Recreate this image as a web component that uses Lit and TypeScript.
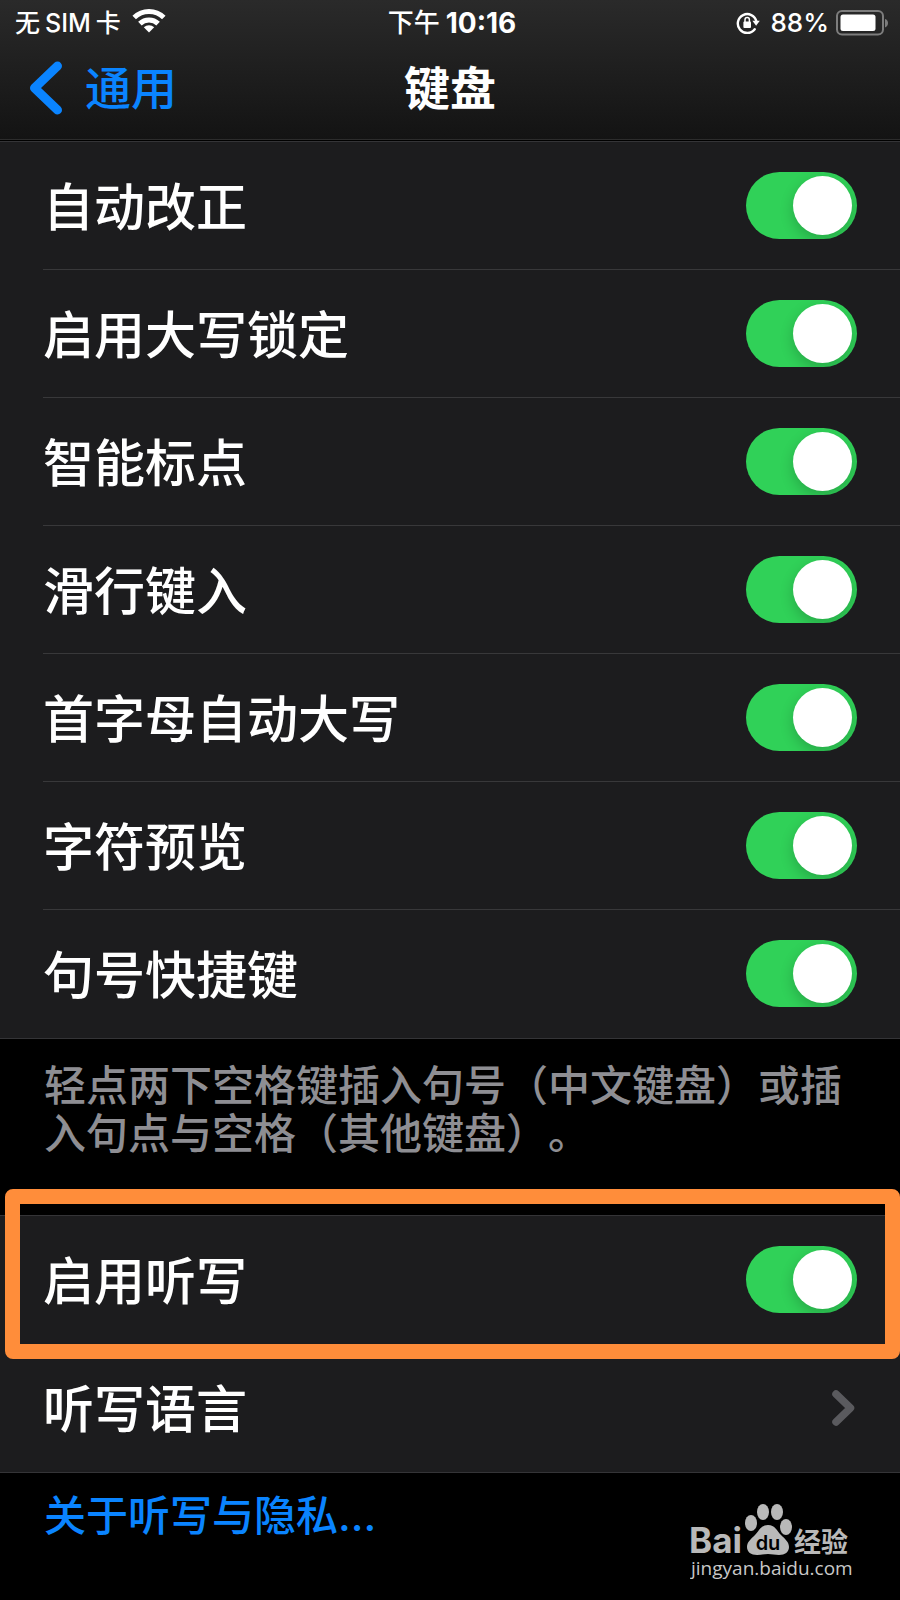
import { LitElement, html, css, svg } from "lit";
import { customElement, property } from "lit/decorators.js";

const wifiIcon = svg`
  <svg class="wifi" viewBox="0 0 34 26" width="34" height="26" aria-hidden="true">
    <g fill="none" stroke="#fff" stroke-width="5">
      <path d="M2.2 9.6a21 21 0 0 1 29.6 0" />
      <path d="M7.9 15.6a13 13 0 0 1 18.2 0" />
    </g>
    <path d="M17 24.5l-5.2-5.2a7.4 7.4 0 0 1 10.4 0z" fill="#fff" />
  </svg>`;

const lockIcon = svg`
  <svg viewBox="0 0 24 24" width="24" height="24" aria-hidden="true">
    <path d="M18.7 18.2A9.4 9.4 0 1 1 20.4 10.5" fill="none" stroke="#fff" stroke-width="2.4" stroke-linecap="round" />
    <path d="M16.4 9.8h7.4l-3.7 5z" fill="#fff" />
    <rect x="7.4" y="10.6" width="7.6" height="6.4" rx="1" fill="#fff" />
    <path d="M9 11V8.8a2.2 2.2 0 0 1 4.4 0V11" fill="none" stroke="#fff" stroke-width="1.5" />
  </svg>`;

const batteryIcon = svg`
  <svg viewBox="0 0 54 26" width="54" height="26" aria-hidden="true">
    <rect x="2" y="1" width="46" height="23.5" rx="5" fill="none" stroke="#7d7d7d" stroke-width="2" />
    <rect x="5.5" y="4.5" width="35" height="16.5" rx="2.5" fill="#fff" />
    <path d="M50 9c4 1 4 7.4 0 8.4z" fill="#7d7d7d" />
  </svg>`;

@customElement("settings-toggle")
export class SettingsToggle extends LitElement {
  @property() label = "";
  @property({ type: Boolean }) on = true;

  static styles = css`
    :host {
      display: block;
    }
    .row {
      display: flex;
      align-items: center;
      justify-content: space-between;
      height: 100%;
      gap: 20px;
    }
    .name {
      padding-top: 4px;
    }
    .switch {
      appearance: none;
      flex: none;
      box-sizing: border-box;
      width: 111px;
      height: 67px;
      margin: 0;
      padding: 4px 5px;
      border-radius: 34px;
      background: #39393d;
      display: flex;
      align-items: center;
      overflow: hidden;
      cursor: pointer;
    }
    .switch::before {
      content: "";
      width: 59px;
      height: 59px;
      border-radius: 50%;
      background: #fff;
      box-shadow: 0 5px 14px rgba(0, 0, 0, 0.2);
    }
    .switch:checked {
      background: #30d158;
      justify-content: flex-end;
    }
  `;

  render() {
    return html`
      <label class="row">
        <span class="name">${this.label}</span>
        <input
          class="switch"
          type="checkbox"
          role="switch"
          .checked=${this.on}
          @change=${(e: Event) => (this.on = (e.target as HTMLInputElement).checked)}
        />
      </label>
    `;
  }
}

@customElement("app-root")
export class AppRoot extends LitElement {
  private typing = [
    "自动改正",
    "启用大写锁定",
    "智能标点",
    "滑行键入",
    "首字母自动大写",
    "字符预览",
    "句号快捷键",
  ];

  static styles = css`
    :host {
      display: block;
      position: relative;
      min-height: 100vh;
      background: #000;
      color: #fff;
      font-family: "Inter", "Noto Sans CJK SC", sans-serif;
      font-weight: 500;
      text-spacing-trim: space-all;
    }
    .header {
      box-sizing: border-box;
      height: 141px;
      background: linear-gradient(#2a2a2a, #131313);
      border-bottom: 1px solid #000;
      box-shadow: inset 0 -1px #2c2c2c;
    }
    .status,
    .nav {
      display: grid;
      grid-template-columns: 1fr auto 1fr;
      align-items: center;
    }
    .status {
      height: 46px;
      padding: 0 11px 0 15px;
      font-size: 26px;
      line-height: 32px;
    }
    .carrier,
    .time,
    .power {
      display: flex;
      align-items: center;
      gap: 6px;
    }
    .carrier {
      gap: 5px;
      font-size: 25px;
    }
    .wifi {
      margin: 0 0 4px 6px;
    }
    .clock {
      font-size: 28px;
      font-weight: 700;
    }
    .power {
      justify-content: flex-end;
    }
    .percent {
      margin-left: 4px;
    }
    .nav {
      height: 84px;
      padding: 0 28px;
    }
    .back {
      justify-self: start;
      display: flex;
      align-items: center;
      gap: 21px;
      padding: 0;
      border: 0;
      background: none;
      color: #0a84ff;
      font: inherit;
      font-size: 46px;
      line-height: 60px;
      cursor: pointer;
    }
    .title {
      margin: 0;
      font-size: 46px;
      line-height: 60px;
      font-weight: 700;
    }
    .group {
      margin: 0;
      padding: 0 0 0 43px;
      list-style: none;
      background: #1c1c1e;
      border-top: 1px solid #343437;
      border-bottom: 1px solid #343437;
      font-size: 51px;
      line-height: 64px;
    }
    .item {
      box-sizing: border-box;
      height: 128px;
      padding-right: 43px;
      border-bottom: 1px solid #38383a;
    }
    .item:last-child,
    .marked .item {
      border-bottom-color: transparent;
    }
    .item settings-toggle,
    .link-row {
      height: 100%;
    }
    .link-row {
      display: flex;
      align-items: center;
      justify-content: space-between;
      color: inherit;
      text-decoration: none;
    }
    .name {
      padding-top: 4px;
    }
    .note {
      margin: 0;
      padding: 23px 40px 57px 44px;
      color: #8e8e93;
      font-size: 42px;
      line-height: 48px;
    }
    .marked {
      position: relative;
    }
    .marked::after {
      content: "";
      position: absolute;
      box-sizing: border-box;
      top: -26px;
      left: 5px;
      right: 0;
      height: 170px;
      border: 15px solid #ff8d3a;
      border-radius: 8px;
      pointer-events: none;
    }
    .about {
      display: block;
      padding: 19px 44px 0;
      color: #0a84ff;
      font-size: 42px;
      line-height: 48px;
      text-decoration: none;
    }
    .watermark {
      position: absolute;
      right: 40px;
      bottom: 12px;
    }
    .site {
      font-family: "Open Sans", sans-serif;
      font-weight: 400;
    }
  `;

  render() {
    return html`
      <header class="header">
        <div class="status">
          <div class="carrier">
            <span>无</span><span>SIM</span><span>卡</span>${wifiIcon}
          </div>
          <div class="time"><span>下午</span><span class="clock">10:16</span></div>
          <div class="power">
            ${lockIcon}<span class="percent">88%</span>${batteryIcon}
          </div>
        </div>
        <nav class="nav">
          <button class="back">
            <svg viewBox="0 0 36 56" width="36" height="56" aria-hidden="true">
              <path d="M29.5 6L6.5 28 29.5 50" fill="none" stroke="#0a84ff" stroke-width="9" stroke-linecap="round" stroke-linejoin="round" />
            </svg>
            <span>通用</span>
          </button>
          <h1 class="title">键盘</h1>
        </nav>
      </header>
      <main>
        <ul class="group">
          ${this.typing.map(
            (name) => html`<li class="item"><settings-toggle .label=${name}></settings-toggle></li>`
          )}
        </ul>
        <p class="note">轻点两下空格键插入句号（中文键盘）或插入句点与空格（其他键盘）。</p>
        <div class="marked">
          <ul class="group">
            <li class="item"><settings-toggle .label=${"启用听写"}></settings-toggle></li>
            <li class="item">
              <a class="link-row" href="#languages">
                <span class="name">听写语言</span>
                <svg viewBox="0 0 28 40" width="28" height="40" aria-hidden="true">
                  <path d="M7 6L21.5 20 7 34" fill="none" stroke="#5a5a5e" stroke-width="7.5" stroke-linecap="round" stroke-linejoin="round" />
                </svg>
              </a>
            </li>
          </ul>
        </div>
        <a class="about" href="#privacy">关于听写与隐私...</a>
      </main>
      <svg class="watermark" viewBox="0 0 170 86" width="170" height="86" fill="#b9b9b9" role="img" aria-label="Baidu 经验">
        <text x="-1" y="51" font-size="35" font-weight="700">Bai</text>
        <ellipse cx="61" cy="21" rx="6" ry="8" />
        <ellipse cx="73" cy="10" rx="6" ry="8" />
        <ellipse cx="87" cy="10" rx="6" ry="8" />
        <ellipse cx="96" cy="25" rx="6" ry="8" />
        <path d="M78 23c-7 0-9 6-13 10s-8 7-8 12c0 5 4 8 10 8 4 0 7-1 11-1s7 1 11 1c6 0 10-3 10-8 0-5-4-8-8-12s-6-10-13-10z" />
        <text x="78" y="48" font-size="20" font-weight="600" fill="#000" text-anchor="middle">du</text>
        <text x="104" y="50" font-size="27" font-weight="700">经验</text>
        <text class="site" x="1" y="73" font-size="19" fill="#c8c8c8">jingyan.baidu.com</text>
      </svg>
    `;
  }
}
